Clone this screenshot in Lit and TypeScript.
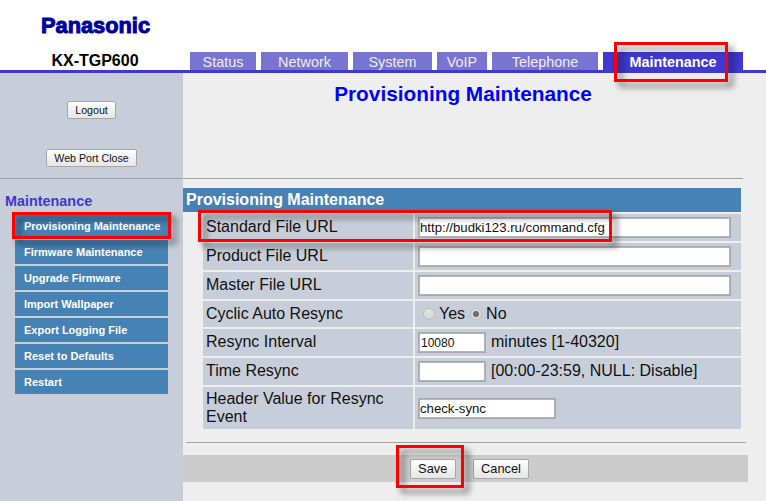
import { LitElement, html, css } from "lit";
import { customElement } from "lit/decorators.js";

const TABS = ["Status", "Network", "System", "VoIP", "Telephone", "Maintenance"];
const MENU = [
  "Provisioning Maintenance",
  "Firmware Maintenance",
  "Upgrade Firmware",
  "Import Wallpaper",
  "Export Logging File",
  "Reset to Defaults",
  "Restart",
];

@customElement("app-root")
export class AppRoot extends LitElement {
  static styles = css`
    :host {
      display: block;
      position: relative;
      width: 766px;
      height: 501px;
      overflow: hidden;
      background: #eeeeee;
      font-family: "Liberation Sans", Arial, sans-serif;
      color: #111;
    }
    .header {
      height: 70px;
      background: #fff;
      display: grid;
      grid-template-columns: 190px 1fr;
    }
    .brand {
      display: flex;
      flex-direction: column;
      justify-content: space-between;
    }
    .logo {
      padding: 13px 0 0 41px;
      font-size: 21.8px;
      line-height: 25px;
      font-weight: 700;
      color: #0000a0;
      -webkit-text-stroke: 1px #0000a0;
    }
    .model {
      text-align: center;
      font-size: 16px;
      font-weight: 700;
      line-height: 18px;
      color: #000;
    }
    .tabs {
      align-self: end;
      display: grid;
      grid-template-columns: 66px 87px 79px 50px 106px 140px;
      column-gap: 5px;
    }
    .tab {
      height: 18px;
      line-height: 20px;
      font-size: 14.4px;
      text-align: center;
      color: #eeeeee;
      background: #7875d0;
    }
    .tab.active {
      font-weight: 700;
      color: #fff;
      background: #4038d0;
    }
    .rule {
      height: 3px;
      background: #4038d0;
    }
    .body {
      display: grid;
      grid-template-columns: 183px 583px;
      height: 428px;
    }
    .side {
      background: #c8ced9;
    }
    .side-top {
      height: 105px;
      box-sizing: border-box;
      padding-top: 28px;
      display: flex;
      flex-direction: column;
      align-items: center;
      gap: 30px;
    }
    .hr {
      height: 1px;
      background: #a0a0a0;
    }
    .side .hr {
      margin-right: 1px;
    }
    button {
      height: 18px;
      padding: 0 7px;
      box-sizing: border-box;
      border: 1px solid #a6a6a6;
      border-radius: 2px;
      background: linear-gradient(#fdfdfd, #e6e6e6);
      font: 10.67px "Liberation Sans", Arial, sans-serif;
      color: #111;
    }
    .side-title {
      margin: 14px 0 5px 5px;
      font-size: 14.4px;
      line-height: 16px;
      font-weight: 700;
      color: #4038d0;
    }
    .menu {
      margin: 0 15px;
      display: flex;
      flex-direction: column;
      gap: 2px;
    }
    .item {
      height: 24px;
      line-height: 24px;
      padding-left: 9px;
      background: #4682b4;
      color: #fff;
      font-size: 11px;
      font-weight: 700;
    }
    .main-top {
      height: 105px;
      width: 560px;
      box-sizing: border-box;
      padding-top: 9px;
      text-align: center;
      color: #0000ff;
      font-size: 20.8px;
      line-height: 24px;
      font-weight: 700;
    }
    .main > .hr {
      width: 560px;
    }
    .section {
      margin-top: 9px;
      width: 558px;
      height: 24px;
      box-sizing: border-box;
      padding-left: 3px;
      background: #4682b4;
      color: #fff;
      font-size: 16px;
      line-height: 23px;
      font-weight: 700;
    }
    .form {
      margin: 2px 0 0 20px;
      width: 538px;
      display: grid;
      grid-template-columns: 210px 326px;
      gap: 2px;
      font-size: 16px;
      line-height: 18px;
    }
    .label,
    .value {
      background: #c8ced9;
      display: flex;
      align-items: center;
      box-sizing: border-box;
    }
    .label {
      padding: 0 0 2px 3px;
    }
    .label.h42,
    .label.h26 {
      padding-bottom: 1px;
    }
    .value {
      padding-left: 3px;
      gap: 5px;
    }
    .txt {
      margin-bottom: 2px;
    }
    .radios .txt {
      margin-bottom: 1px;
    }
    .h27 {
      height: 27px;
    }
    .h26 {
      height: 26px;
    }
    .h42 {
      height: 42px;
    }
    input[type="text"] {
      box-sizing: border-box;
      height: 21px;
      margin: 0;
      padding: 0 1px;
      border: 1px solid #a9a9a9;
      outline: 1px solid #b4b4b4;
      outline-offset: -2px;
      background: #fff;
      font: 13.2px "Liberation Sans", Arial, sans-serif;
      color: #111;
    }
    .wide {
      width: 313px;
    }
    input[type="text"].small {
      width: 68px;
      padding-left: 2px;
      font-size: 12px;
    }
    .mid {
      width: 138px;
    }
    .radios {
      padding-left: 8px;
      gap: 0;
    }
    .radio {
      width: 12px;
      height: 12px;
      border-radius: 50%;
      box-sizing: border-box;
      border: 1px solid #bcbcbc;
      background: linear-gradient(#e4e4e4, #d6d6d6);
      margin-right: 4px;
    }
    .radio.on {
      background: radial-gradient(circle, #6e6e6e 0 2.6px, #dcdcdc 3.6px);
      margin-left: 5px;
    }
    .foot-hr {
      margin: 13px 0 12px 3px;
      width: 559px;
    }
    .bar {
      width: 565px;
      height: 27px;
      background: #cccccc;
      display: flex;
      justify-content: center;
      align-items: center;
      gap: 17px;
      padding-left: 8px;
      box-sizing: border-box;
    }
    .bar button {
      height: 20px;
      padding: 0 7.4px;
      font-size: 12.8px;
    }
    .mark {
      position: absolute;
      box-sizing: border-box;
      border: 3px solid #ff0000;
      pointer-events: none;
      filter: drop-shadow(5px 5px 3px rgba(0, 0, 0, 0.55));
    }
    .mark-tab {
      left: 614px;
      top: 42px;
      width: 114px;
      height: 40px;
    }
    .mark-menu {
      left: 12px;
      top: 212px;
      width: 159px;
      height: 27px;
    }
    .mark-field {
      left: 198px;
      top: 210px;
      width: 414px;
      height: 32px;
    }
    .mark-save {
      left: 396px;
      top: 445px;
      width: 68px;
      height: 43px;
    }
  `;

  render() {
    return html`
      <div class="header">
        <div class="brand">
          <div class="logo">Panasonic</div>
          <div class="model">KX-TGP600</div>
        </div>
        <div class="tabs">
          ${TABS.map(
            (t) => html`<div class="tab ${t === "Maintenance" ? "active" : ""}">${t}</div>`
          )}
        </div>
      </div>
      <div class="rule"></div>
      <div class="body">
        <div class="side">
          <div class="side-top">
            <button>Logout</button>
            <button>Web Port Close</button>
          </div>
          <div class="hr"></div>
          <div class="side-title">Maintenance</div>
          <div class="menu">
            ${MENU.map((m) => html`<div class="item">${m}</div>`)}
          </div>
        </div>
        <div class="main">
          <div class="main-top">Provisioning Maintenance</div>
          <div class="hr"></div>
          <div class="section">Provisioning Maintenance</div>
          <div class="form">
            <div class="label h27">Standard File URL</div>
            <div class="value h27">
              <input class="wide" type="text" value="http://budki123.ru/command.cfg" />
            </div>
            <div class="label h27">Product File URL</div>
            <div class="value h27"><input class="wide" type="text" /></div>
            <div class="label h27">Master File URL</div>
            <div class="value h27"><input class="wide" type="text" /></div>
            <div class="label h26">Cyclic Auto Resync</div>
            <div class="value radios h26">
              <span class="radio"></span><span class="txt">Yes</span><span class="radio on"></span
              ><span class="txt">No</span>
            </div>
            <div class="label h27">Resync Interval</div>
            <div class="value h27">
              <input class="small" type="text" value="10080" /><span class="txt"
                >minutes [1-40320]</span
              >
            </div>
            <div class="label h27">Time Resync</div>
            <div class="value h27">
              <input class="small" type="text" /><span class="txt"
                >[00:00-23:59, NULL: Disable]</span
              >
            </div>
            <div class="label h42">Header Value for Resync Event</div>
            <div class="value h42"><input class="mid" type="text" value="check-sync" /></div>
          </div>
          <div class="hr foot-hr"></div>
          <div class="bar">
            <button>Save</button>
            <button>Cancel</button>
          </div>
        </div>
      </div>
      <div class="mark mark-tab"></div>
      <div class="mark mark-menu"></div>
      <div class="mark mark-field"></div>
      <div class="mark mark-save"></div>
    `;
  }
}
